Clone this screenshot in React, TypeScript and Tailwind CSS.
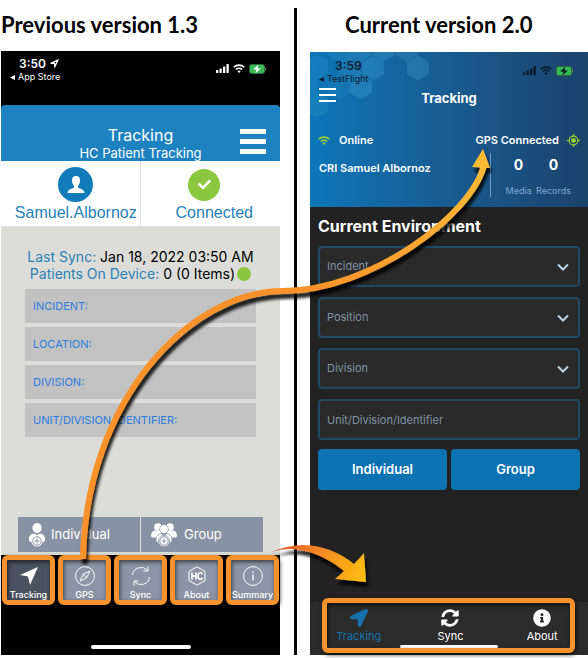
import { useId, type ReactNode } from "react";
import { FaCheck, FaInfoCircle, FaLocationArrow, FaSyncAlt } from "react-icons/fa";

const fieldBox =
  "h-[41px] w-full appearance-none rounded border-2 border-[#1d4a66] bg-[#2a2a2a] px-[7px] text-[11px] text-[#7d93a5] placeholder:text-[#7d93a5] focus:outline-none";

function Signal({ className }: { className: string }) {
  return (
    <svg viewBox="0 0 13 9" className={className} fill="currentColor" aria-hidden="true">
      <rect x="0" y="6" width="2.3" height="3" rx="0.6" />
      <rect x="3.5" y="4.4" width="2.3" height="4.6" rx="0.6" />
      <rect x="7" y="2.4" width="2.3" height="6.6" rx="0.6" />
      <rect x="10.5" y="0" width="2.3" height="9" rx="0.6" />
    </svg>
  );
}

function Wifi({ className }: { className: string }) {
  return (
    <svg viewBox="0 0 24 18" className={className} fill="none" stroke="currentColor" strokeWidth="3.4" aria-hidden="true">
      <path d="M1.5 6.5a15 15 0 0 1 21 0" />
      <path d="M5.8 11a9 9 0 0 1 12.4 0" />
      <path d="M12 18l-3.4-3.6a5 5 0 0 1 6.8 0z" fill="currentColor" stroke="none" />
    </svg>
  );
}

function Battery({ bolt }: { bolt: string }) {
  return (
    <svg viewBox="0 0 18 10" className="h-[10px] w-[18px]" aria-hidden="true">
      <rect x="0.5" y="0.5" width="15" height="9" rx="2" fill="#37b955" stroke="#2c6b3c" />
      <path d="M16.5 3.5v3" stroke="#5c8f68" />
      <path d="M9.5 0.5L4 5.6h3.4L6.4 9.5 12 4.4H8.6z" fill={bolt} />
    </svg>
  );
}

function StatusBar({ time, back, dark }: { time: string; back: string; dark?: boolean }) {
  return (
    <div className={dark ? "flex justify-between pr-[14px] pl-[9px] pt-[6px] text-[#0b1a2a]" : "flex h-[54px] justify-between bg-black pr-[13px] pl-[9px] pt-[5px] text-white"}>
      <div>
        <div className={(dark ? "pl-[16px]" : "pl-[9px]") + " flex items-center gap-1 text-[12px] leading-[15px] font-semibold"}>
          {time}
          {!dark && (
            <svg viewBox="0 0 10 10" className="size-[9px]" fill="none" stroke="currentColor" strokeWidth="1.4" strokeLinejoin="round" aria-hidden="true">
              <path d="M9 1L1 4.8h4.2V9z" />
            </svg>
          )}
        </div>
        <a href="#back" className="flex items-center gap-[3px] text-[9px] leading-[12px]">
          <svg viewBox="0 0 6 6" className="size-[5px]" fill="currentColor" aria-hidden="true">
            <path d="M6 0v6L0 3z" />
          </svg>
          {back}
        </a>
      </div>
      <div className="flex h-[25px] items-center gap-1">
        <Signal className="h-[9px] w-[13px]" />
        <Wifi className="h-[9px] w-[12px]" />
        <Battery bolt={dark ? "#0b1a2a" : "#ffffff"} />
      </div>
    </div>
  );
}

function LegacyTab({ label, active, children }: { label: string; active?: boolean; children: ReactNode }) {
  return (
    <button
      type="button"
      className={
        (active ? "bg-[#4a5260]" : "bg-[#8c95a5]") +
        " flex h-[50px] min-w-0 flex-col items-center justify-end gap-[3px] rounded-md border-[5px] border-[#f7922d] text-[9px] leading-[11px] font-medium text-white shadow-[1px_2px_4px_rgba(0,0,0,0.7),inset_1px_2px_4px_rgba(0,0,0,0.6)]"
      }
    >
      <svg viewBox="0 0 20 20" className="size-[20px] shrink-0" fill="none" stroke="currentColor" aria-hidden="true">
        {children}
      </svg>
      {label}
    </button>
  );
}

function PersonPlus({ group }: { group?: boolean }) {
  return (
    <svg viewBox={group ? "0 0 26 24" : "0 0 18 24"} className={group ? "h-[24px] w-[26px]" : "h-[24px] w-[18px]"} fill="#fff" aria-hidden="true">
      {group ? (
        <>
          <circle cx="7" cy="4" r="3.8" />
          <circle cx="19" cy="4" r="3.8" />
          <path d="M0 13q0-5 4-5.5h6v7H1zM26 13q0-5-4-5.500h-6v7h9z" />
          <g stroke="#8793a3" strokeWidth="0.7">
            <circle cx="13" cy="6" r="4.400" />
            <path d="M5 18q0-7 5-7.400l3 2 3-2q5 .4 5 7.400l-2 2H7z" />
            <circle cx="13" cy="18" r="5.600" />
          </g>
          <g fill="none" stroke="#8793a3">
            <circle cx="13" cy="18" r="4.200" />
            <path d="M13 15.600v4.800M10.600 18h4.800" />
          </g>
        </>
      ) : (
        <>
          <ellipse cx="9" cy="5" rx="4.600" ry="5" />
          <path d="M1 18Q0 11 6 10.400L9 12l3-1.600Q18 11 17 18l-2 1H3z" />
          <circle cx="9" cy="18" r="5.600" />
          <g fill="none" stroke="#8793a3">
            <circle cx="9" cy="18" r="4.200" />
            <path d="M9 15.600v4.800M6.600 18h4.800" />
          </g>
        </>
      )}
    </svg>
  );
}

function LegacyPhone() {
  return (
    <section aria-label="Previous app" className="flex flex-col bg-[#dcddd8] font-['Inter',sans-serif]">
      <div className="bg-black">
        <StatusBar time="3:50" back="App Store" />
        <header className="relative flex h-[56px] flex-col items-center justify-end rounded-t bg-[#1e82c0] text-white">
          <h2 className="text-[16px] leading-[20px]">Tracking</h2>
          <p className="text-[13px] leading-[16px]">HC Patient Tracking</p>
          <button type="button" aria-label="Menu" className="absolute right-[14px] bottom-[7px] flex flex-col gap-[5px]">
            <span className="h-[5px] w-[26px] bg-white" />
            <span className="h-[5px] w-[26px] bg-white" />
            <span className="h-[5px] w-[26px] bg-white" />
          </button>
        </header>
      </div>
      <div className="grid h-[65px] grid-cols-2 bg-white font-['Liberation_Sans',sans-serif] text-[16px] leading-[18px] text-[#1f7fbb]">
        <div className="flex flex-col items-center gap-[2px] border-r border-[#e3e3e3] pt-[6px] pl-[11px]">
          <span className="flex size-[35px] items-center justify-center rounded-full bg-[#127cba] text-white">
            <svg viewBox="0 0 18 18" className="size-[18px]" fill="currentColor" aria-hidden="true">
              <path d="M9 0C6 0 4.800 2 5 4.500 5.200 7.500 6 8.800 7 10v1.500C5.500 13 .5 13 .5 17h17c0-4-5-4-6.500-5.500V10c1-1.200 1.800-2.500 2-5.500C13.200 2 12 0 9 0z" />
            </svg>
          </span>
          Samuel.Albornoz
        </div>
        <div className="flex flex-col items-center gap-[3px] pt-[7px] pl-[8px]">
          <span className="flex h-[33px] items-center pr-[20px]">
            <span className="flex size-[32px] items-center justify-center rounded-full bg-[#8bc83f] text-white">
              <FaCheck className="size-[13px]" />
            </span>
          </span>
          Connected
        </div>
      </div>
      <div className="h-[63px] pt-[22px] text-center text-[14px] leading-[17px] text-black">
        <p>
          <span className="text-[#2a80b9]">Last Sync:</span> Jan 18, 2022 03:50 AM
        </p>
        <p className="flex items-center justify-center gap-[2px]">
          <span>
            <span className="text-[#2a80b9]">Patients On Device:</span> 0 (0 Items)
          </span>
          <span className="size-[14px] rounded-full bg-[#8bc83f]" />
        </p>
      </div>
      <div className="flex flex-col gap-[4px] px-[24px] text-[11px] text-[#2b7de0]">
        {["INCIDENT:", "LOCATION:", "DIVISION:", "UNIT/DIVISION/IDENTIFIER:"].map((name) => (
          <button key={name} type="button" className="flex h-[34px] items-center bg-[#c2c2c2] px-[8px]">
            {name}
          </button>
        ))}
      </div>
      <div className="mt-[80px] grid grid-cols-2 gap-px px-[17px] text-[13px] text-white">
        <button type="button" className="flex h-[35px] items-center gap-[5px] bg-[#8793a3] pl-[10px]">
          <PersonPlus />
          Individual
        </button>
        <button type="button" className="flex h-[35px] items-center gap-[7px] bg-[#8793a3] pl-[10px]">
          <PersonPlus group />
          Group
        </button>
      </div>
      <nav className="mt-[3px] grid grid-cols-5 gap-[3px] bg-black px-px">
        <LegacyTab label="Tracking" active>
          <path d="M19 1L1 9l8 1.500L11 19z" fill="currentColor" stroke="none" />
        </LegacyTab>
        <LegacyTab label="GPS">
          <circle cx="10" cy="10" r="9.400" />
          <path d="M15 5l-3.500 7L5 15l3.500-7zM8.500 8l3 4" />
        </LegacyTab>
        <LegacyTab label="Sync">
          <path d="M1.500 9a8.500 8.500 0 0 1 15-4.500M18.500 11a8.500 8.500 0 0 1-15 4.500M17 .5v4.500h-4.500M3 19.500V15h4.500" />
        </LegacyTab>
        <LegacyTab label="About">
          <path d="M10 .8l8 4.600v9.200l-8 4.600-8-4.600V5.400z" />
          <path d="M5 6.500v7M9 6.500v7M5 10h4M15.500 8q-1-1.500-2.500-1.200-2 .3-2 3.200t2 3.200q1.500.3 2.500-1.200" strokeWidth="1.600" />
        </LegacyTab>
        <LegacyTab label="Summary">
          <circle cx="10" cy="10" r="9.400" />
          <path d="M10 8.500v6M10 5.500v1.500" strokeWidth="1.300" />
        </LegacyTab>
      </nav>
      <div className="flex h-[50px] items-end justify-center bg-black pb-[6px]">
        <span className="h-[4px] w-[100px] rounded-full bg-white" />
      </div>
    </section>
  );
}

const hexCenters = [
  [7, 15, 0.14], [40, 16, 0.18], [63, 16, 0.26], [29, -3, 0.14], [51, -3, 0.2], [74, -3, 0.25],
  [97, -3, 0.2], [108, 16, 0.24], [29, 35, 0.08], [51, 35, 0.26], [7, 53, 0.16], [-4, 34, 0.12],
];

function Hexagons() {
  return (
    <svg viewBox="0 0 140 70" className="absolute top-0 left-0 h-[70px] w-[140px]" aria-hidden="true">
      {hexCenters.map(([x, y, o]) => (
        <path
          key={x + "," + y}
          transform={"translate(" + x + " " + y + ")"}
          d="M0-12l10.500 6v12L0 12l-10.500-6V-6z"
          fill="#4fb3e0"
          fillOpacity={o}
          stroke="#4fb3e0"
          strokeOpacity="0.12"
        />
      ))}
    </svg>
  );
}

function SelectField({ label }: { label: string }) {
  return (
    <div className="relative">
      <select aria-label={label} className={fieldBox}>
        <option>{label}</option>
      </select>
      <svg viewBox="0 0 12 8" className="pointer-events-none absolute top-[17px] right-[11px] h-[8px] w-[12px]" fill="none" stroke="#b9d5ea" strokeWidth="2" aria-hidden="true">
        <path d="M1 1.500l5 5 5-5" />
      </svg>
    </div>
  );
}

function CurrentPhone() {
  return (
    <section aria-label="Current app" className="flex flex-col bg-[#222222] font-['Inter',sans-serif] text-white">
      <header className="relative h-[155px] bg-linear-to-r from-[#0b76b8] to-[#1b426b]">
        <Hexagons />
        <div className="relative">
          <StatusBar time="3:59" back="TestFlight" dark />
          <div className="grid grid-cols-[1fr_auto_1fr] items-center px-[9px]">
            <button type="button" aria-label="Menu" className="-mt-[6px] flex w-[17px] flex-col gap-[4px]">
              <span className="h-[2px] bg-white" />
              <span className="h-[2px] bg-white" />
              <span className="h-[2px] bg-white" />
            </button>
            <h2 className="text-[13px] leading-[26px] font-bold">Tracking</h2>
          </div>
          <div className="mt-[21px] flex items-center px-[8px] text-[11px] leading-[16px] font-semibold">
            <Wifi className="mr-[9px] h-[9px] w-[12px] text-[#9ad12f]" />
            Online
            <span className="ml-auto">GPS Connected</span>
            <svg viewBox="0 0 14 14" className="ml-[8px] size-[13px]" fill="none" stroke="#9ad12f" strokeWidth="1.300" aria-hidden="true">
              <circle cx="7" cy="7" r="4.700" />
              <circle cx="7" cy="7" r="2" fill="#9ad12f" />
              <path d="M7 0v2.500M7 11.500V14M0 7h2.500M11.500 7H14" />
            </svg>
          </div>
          <div className="mt-[5px] flex justify-between pr-[17px] pl-[9px]">
            <p className="pt-[7px] text-[11px] leading-[16px] font-semibold">CRI Samuel Albornoz</p>
            <dl className="grid h-[44px] grid-cols-2 border-l border-[#6f9fc8] pl-[10px] text-center">
              <div className="flex flex-col-reverse justify-between">
                <dt className="text-[9px] leading-[12px] text-[#7fa8cc]">Media</dt>
                <dd className="pt-[3px] text-[14px] leading-[18px] font-bold">0</dd>
              </div>
              <div className="flex flex-col-reverse justify-between">
                <dt className="text-[9px] leading-[12px] text-[#7fa8cc]">Records</dt>
                <dd className="pt-[3px] text-[14px] leading-[18px] font-bold">0</dd>
              </div>
            </dl>
          </div>
        </div>
      </header>
      <form className="px-[8px]">
        <h3 className="h-[39px] pt-[9px] text-[16px] leading-[20px] font-bold">Current Environment</h3>
        <div className="flex flex-col gap-[10px]">
          <SelectField label="Incident" />
          <SelectField label="Position" />
          <SelectField label="Division" />
          <input aria-label="Unit/Division/Identifier" placeholder="Unit/Division/Identifier" className={fieldBox} />
        </div>
        <div className="mt-[9px] grid grid-cols-2 gap-[4px] text-[13px] font-semibold">
          <button type="button" className="h-[41px] rounded bg-[#0c72b2]">Individual</button>
          <button type="button" className="h-[41px] rounded bg-[#0c72b2]">Group</button>
        </div>
      </form>
      <nav className="relative mt-auto h-[53px] bg-[#2b2b2b] pt-[7px]">
        <div className="grid grid-cols-3 pl-[3px] text-[11px] leading-[14px]">
          <button type="button" className="flex flex-col items-center gap-[2px] text-[#1672ad]">
            <FaLocationArrow className="size-[18px]" />
            Tracking
          </button>
          <button type="button" className="flex flex-col items-center gap-[2px]">
            <FaSyncAlt className="size-[18px]" />
            Sync
          </button>
          <button type="button" className="flex flex-col items-center gap-[2px]">
            <FaInfoCircle className="size-[18px]" />
            About
          </button>
        </div>
        <span className="mx-auto mt-[2px] block h-[3px] w-[98px] rounded-full bg-white" />
        <span className="absolute -top-[4px] right-[13px] bottom-[2px] left-[12px] rounded-md border-[5px] border-[#f7922d] shadow-[1px_2px_4px_rgba(0,0,0,0.7),inset_1px_2px_4px_rgba(0,0,0,0.6)]" />
      </nav>
    </section>
  );
}

function Callouts() {
  const id = useId();
  return (
    <svg viewBox="0 0 588 658" preserveAspectRatio="none" className="pointer-events-none absolute inset-0 h-full w-full" aria-hidden="true">
      <defs>
        <linearGradient id={id + "long"} gradientUnits="userSpaceOnUse" x1="83" y1="560" x2="485" y2="150">
          <stop offset="0.6" stopColor="#f9922b" />
          <stop offset="1" stopColor="#fdbb38" />
        </linearGradient>
        <linearGradient id={id + "short"} gradientUnits="userSpaceOnUse" x1="272" y1="550" x2="366" y2="580">
          <stop offset="0" stopColor="#e4552c" />
          <stop offset="0.5" stopColor="#f58a25" />
          <stop offset="1" stopColor="#ffc20e" />
        </linearGradient>
        <filter id={id + "shade"} filterUnits="userSpaceOnUse" x="0" y="0" width="588" height="658">
          <feDropShadow dx="2" dy="5" stdDeviation="1.500" floodColor="#000" floodOpacity="0.85" />
        </filter>
      </defs>
      <g filter={"url(#" + id + "shade)"}>
        <path d="M83 559C86 400 190 291 283 291C370 291 472 215 484 165" fill="none" stroke={"url(#" + id + "long)"} strokeWidth="6" />
        <path d="M483 149l-11 18 18 1z" fill="#fdbb38" />
      </g>
      <path
        d="M271 552Q288 545 304 545Q332 546 354 564L364 553L366 582L335 579L344 571Q318 550 290 549Q280 549 271 552Z"
        fill={"url(#" + id + "short)"}
        filter={"url(#" + id + "shade)"}
      />
    </svg>
  );
}

export default function App() {
  return (
    <main className="relative bg-white pb-[3px] pl-px">
      <div className="flex">
        <div className="min-w-0 flex-[279]">
          <h1 className="h-[51px] pt-[10px] font-['Lato',sans-serif] text-[22px] leading-[30px] font-bold whitespace-nowrap text-black">Previous version 1.3</h1>
          <LegacyPhone />
        </div>
        <div className="mt-[8px] mr-[13px] ml-[14px] w-[3px] bg-black" />
        <div className="flex min-w-0 flex-[278] flex-col">
          <h1 className="h-[52px] pt-[10px] pl-[35px] font-['Lato',sans-serif] text-[22px] leading-[30px] font-bold whitespace-nowrap text-black">Current version 2.0</h1>
          <div className="grid flex-1">
            <CurrentPhone />
          </div>
        </div>
      </div>
      <Callouts />
    </main>
  );
}
